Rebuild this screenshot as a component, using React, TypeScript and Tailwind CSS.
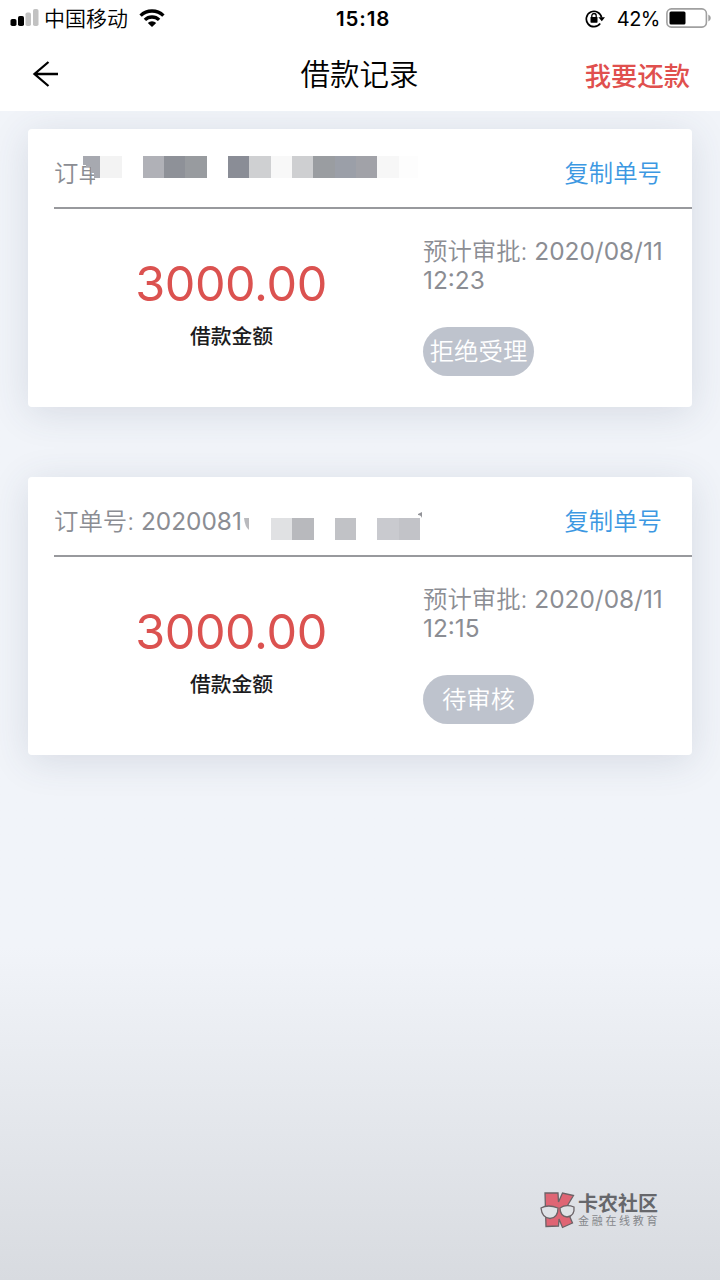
import React from "react";

interface Block {
  x: number;
  width: number;
  color: string;
}

interface LoanRecord {
  orderLabel: string;
  orderNumber?: string;
  amount: string;
  date: string;
  time: string;
  status: string;
  maskTop: number;
  blocks: Block[];
}

const records: LoanRecord[] = [
  {
    orderLabel: "订单",
    amount: "3000.00",
    date: "2020/08/11",
    time: "12:23",
    status: "拒绝受理",
    maskTop: 27,
    blocks: [
      { x: 72, width: 22, color: "#f3f3f3" },
      { x: 115, width: 21, color: "#b0b1b7" },
      { x: 136, width: 21, color: "#8e9198" },
      { x: 157, width: 22, color: "#989b9f" },
      { x: 200, width: 21, color: "#8a8d96" },
      { x: 221, width: 22, color: "#cfd0d2" },
      { x: 243, width: 21, color: "#f8f8f8" },
      { x: 264, width: 21, color: "#cecfd1" },
      { x: 285, width: 22, color: "#9a9da1" },
      { x: 307, width: 21, color: "#9b9fa8" },
      { x: 328, width: 21, color: "#a1a2a8" },
      { x: 349, width: 22, color: "#f7f7f7" },
      { x: 371, width: 19, color: "#fdfdfd" },
    ],
  },
  {
    orderLabel: "订单号: ",
    orderNumber: "2020081",
    amount: "3000.00",
    date: "2020/08/11",
    time: "12:15",
    status: "待审核",
    maskTop: 41,
    blocks: [
      { x: 243, width: 21, color: "#e0e1e3" },
      { x: 264, width: 22, color: "#b8b9bd" },
      { x: 307, width: 21, color: "#c1c2c6" },
      { x: 349, width: 22, color: "#c9cacf" },
      { x: 371, width: 21, color: "#c2c3c8" },
    ],
  },
];

const StatusBar: React.FC = () => (
  <div className="relative flex h-[36px] items-center justify-between pl-[10px] pr-[9px] text-black">
    <div className="flex items-center">
      <svg width="29" height="18" viewBox="0 0 29 18">
        <rect x="0.5" y="10" width="6" height="7" rx="1.8" />
        <rect x="8" y="7" width="6" height="10" rx="1.8" />
        <rect x="15.5" y="3.5" width="5.5" height="13.5" rx="1.8" fill="#c2c2c2" />
        <rect x="23" y="0" width="5.5" height="17" rx="1.8" fill="#c2c2c2" />
      </svg>
      <span className="ml-[5px] text-[21px] leading-none font-[350]">中国移动</span>
      <svg className="ml-[11px]" width="26" height="18" viewBox="0 0 26 18">
        <g fill="none" stroke="#000" strokeWidth="3.4">
          <path d="M1.6 6.6 A16.4 16.4 0 0 1 24.4 6.6" />
          <path d="M5.9 10.9 A10.2 10.2 0 0 1 20.1 10.9" />
        </g>
        <path d="M8.8 14 A6 6 0 0 1 17.2 14 L13 18 Z" />
      </svg>
    </div>
    <span className="absolute left-[336px] top-[9px] text-[20.5px] font-semibold leading-none tracking-[0.85px]">
      15:18
    </span>
    <div className="flex items-center">
      <svg width="20" height="19" viewBox="0 0 20 19">
        <path d="M15.2 14.6 A7.7 7.7 0 1 1 16.6 8.6" fill="none" stroke="#000" strokeWidth="1.7" />
        <path d="M13.4 8.3 H20 L16.8 12.2 Z" />
        <rect x="5.5" y="8" width="7" height="5.7" rx="0.6" />
        <path d="M6.8 8.4 V6.7 A2.2 2.2 0 0 1 11.2 6.7 V8.4" fill="none" stroke="#000" strokeWidth="1.3" />
      </svg>
      <span className="ml-[12px] pt-px text-[20px] leading-none tracking-[-0.5px]">42%</span>
      <svg className="ml-[6px]" width="45" height="20" viewBox="0 0 45 20">
        <rect x="0.9" y="0.9" width="39.5" height="18.2" rx="4.5" fill="none" stroke="#a0a0a0" strokeWidth="1.6" />
        <rect x="3.5" y="3.5" width="16" height="13" rx="1.5" />
        <path d="M42.3 6.5 Q44.8 7.5 44.8 10 Q44.8 12.5 42.3 13.5 Z" fill="#a0a0a0" />
      </svg>
    </div>
  </div>
);

const NavBar: React.FC = () => (
  <div className="grid h-[75px] grid-cols-3 items-center pl-[32px] pr-[30px]">
    <button aria-label="返回">
      <svg width="27" height="26" viewBox="0 0 27 26" fill="none" stroke="#000" strokeWidth="2.3">
        <path d="M16.5 1 L2.5 13 L16.5 25 M2 13 H26" />
      </svg>
    </button>
    <h1 className="whitespace-nowrap pr-[3px] pt-[2px] text-center text-[29.5px] font-[350] leading-none text-black">
      借款记录
    </h1>
    <button className="justify-self-end whitespace-nowrap pt-[7px] text-[26.3px] font-medium leading-none text-[#e0504e]">
      我要还款
    </button>
  </div>
);

const RecordCard: React.FC<{ record: LoanRecord; children?: React.ReactNode }> = ({ record, children }) => (
  <section className="relative h-[278px] rounded-[4px] bg-white shadow-[0_6px_38px_rgba(60,70,100,0.14)]">
    <div className="ml-[26px] flex h-[80px] items-center justify-between border-b-2 border-[#98999d] pr-[30px] pt-[10px] text-[24.4px] font-[350] leading-none">
      <span className="whitespace-pre text-[#8b8d93]">
        {record.orderLabel}
        <span className="font-normal">{record.orderNumber}</span>
      </span>
      <button className="text-[#3c98e2]">复制单号</button>
    </div>
    <div className="flex">
      <div className="flex w-[394px] flex-col items-center pl-[12px] pt-[47px]">
        <span className="text-[48.5px] leading-[56px] tracking-[-0.4px] text-[#db5250]">{record.amount}</span>
        <span className="mt-[13px] pl-px text-[20.8px] font-medium leading-[24px] text-[#1b1b1d]">借款金额</span>
      </div>
      <div className="flex flex-col items-start pl-px pt-[28px] text-[24.4px] font-[350] leading-[29px] text-[#8b8d93]">
        <span className="whitespace-nowrap">
          预计审批: <span className="font-normal">{record.date}</span>
        </span>
        <span className="font-normal">{record.time}</span>
        <span className="mt-[32px] flex h-[49px] w-[111px] items-center justify-center whitespace-nowrap rounded-full bg-[#bec3cd] text-white">
          {record.status}
        </span>
      </div>
    </div>
    {record.blocks.map((block) => (
      <span
        key={block.x}
        className="absolute h-[22px]"
        style={{ left: block.x, top: record.maskTop, width: block.width, background: block.color }}
      />
    ))}
    {children}
  </section>
);

const CommunityLogo: React.FC = () => (
  <div className="absolute left-[540px] top-[1190px] flex items-center">
    <svg width="36" height="40" viewBox="0 0 36 40" stroke="#6b6367" strokeWidth="1.3">
      <path
        d="M5 3 L18 3 L18.5 12 L22.5 3 L33.5 5.5 L26 18 L32.5 33 L22.5 37.5 L19 29 L18.5 36 L6 36.5 Z"
        fill="#df6574"
      />
      <path d="M1 18 Q8 14 18 18 Q18 28 10 28.5 Q2 28 1 18 Z" fill="#dfe2e6" />
      <path d="M20 18 Q26 14 34 17 Q35 26 27 27 Q20 26 20 18 Z" fill="#dfe2e6" />
    </svg>
    <div className="ml-[2px] flex flex-col pt-[2px]">
      <span className="whitespace-nowrap text-[20px] font-bold leading-[20px] text-[#66676b]">卡农社区</span>
      <span className="mt-px whitespace-nowrap text-[11px] leading-[13px] tracking-[2.7px] text-[#85878b]">
        金融在线教育
      </span>
    </div>
  </div>
);

export default function App() {
  return (
    <div className="relative h-[1280px] w-[720px] overflow-hidden bg-[#f1f4f9] bg-linear-to-b from-[#f1f4f9] from-74% to-[#d8dbe0] font-['Inter','Noto_Sans_CJK_SC',sans-serif]">
      <header className="relative z-10 bg-white">
        <StatusBar />
        <NavBar />
      </header>
      <main className="flex flex-col gap-[70px] px-[28px] pt-[18px]">
        <RecordCard record={records[0]}>
          <svg className="absolute left-[54px] top-[27px]" width="24" height="36" viewBox="0 0 24 36">
            <path d="M13 22 H24 V36 H14 Z" fill="#fff" />
            <path d="M1 0 H18 V22 H12 V17 H9 V11 H4 V9 H1 Z" fill="#a7a9b0" />
          </svg>
        </RecordCard>
        <RecordCard record={records[1]}>
          <svg className="absolute left-[215px] top-[35px]" width="182" height="22" viewBox="0 0 182 22">
            <path d="M1 6 H6 V18 Q2 15 1 6 Z" fill="#b9babe" />
            <path d="M175 2 L179 0 V6 Q178 3 175 3 Z" fill="#929398" />
          </svg>
        </RecordCard>
      </main>
      <CommunityLogo />
    </div>
  );
}
